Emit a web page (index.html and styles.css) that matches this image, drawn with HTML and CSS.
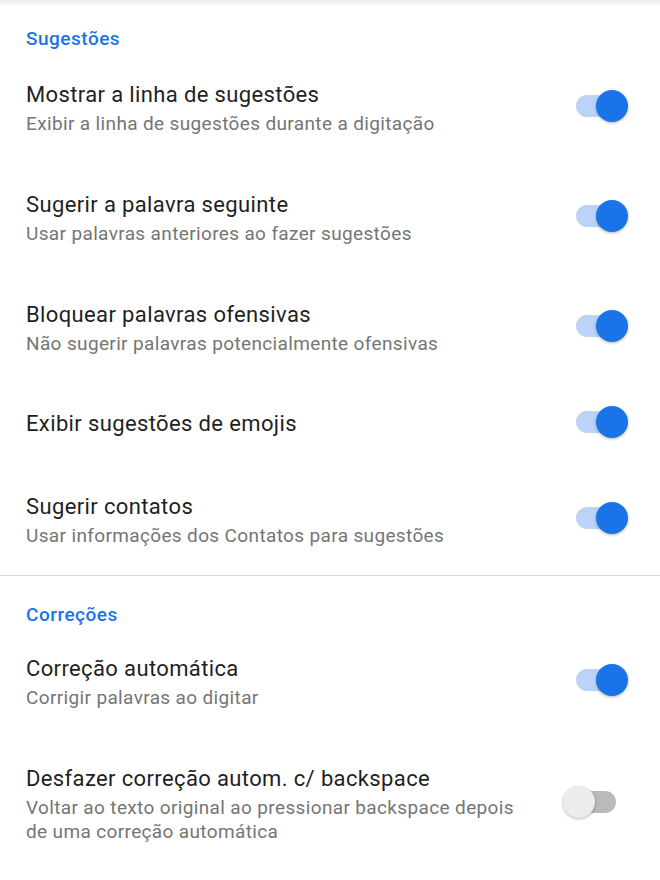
FILE: index.html
```html
<!DOCTYPE html>
<html lang="pt-BR">
<head>
<meta charset="utf-8">
<title>Sugestões</title>
<link rel="stylesheet" href="styles.css">
</head>
<body>
<div class="shadow"></div>
<section class="category">
  <h2 class="cat-title">Sugestões</h2>
  <div class="row">
    <div class="text"><div class="title">Mostrar a linha de sugestões</div><div class="summary">Exibir a linha de sugestões durante a digitação</div></div>
    <div class="switch on"><span class="track"></span><span class="thumb"></span></div>
  </div>
  <div class="row">
    <div class="text"><div class="title">Sugerir a palavra seguinte</div><div class="summary">Usar palavras anteriores ao fazer sugestões</div></div>
    <div class="switch on"><span class="track"></span><span class="thumb"></span></div>
  </div>
  <div class="row">
    <div class="text"><div class="title">Bloquear palavras ofensivas</div><div class="summary">Não sugerir palavras potencialmente ofensivas</div></div>
    <div class="switch on"><span class="track"></span><span class="thumb"></span></div>
  </div>
  <div class="row single">
    <div class="text"><div class="title">Exibir sugestões de emojis</div></div>
    <div class="switch on"><span class="track"></span><span class="thumb"></span></div>
  </div>
  <div class="row">
    <div class="text"><div class="title">Sugerir contatos</div><div class="summary">Usar informações dos Contatos para sugestões</div></div>
    <div class="switch on"><span class="track"></span><span class="thumb"></span></div>
  </div>
</section>
<section class="category second">
  <h2 class="cat-title">Correções</h2>
  <div class="row">
    <div class="text"><div class="title">Correção automática</div><div class="summary">Corrigir palavras ao digitar</div></div>
    <div class="switch on"><span class="track"></span><span class="thumb"></span></div>
  </div>
  <div class="row">
    <div class="text"><div class="title">Desfazer correção autom. c/ backspace</div><div class="summary">Voltar ao texto original ao pressionar backspace depois de uma correção automática</div></div>
    <div class="switch off"><span class="track"></span><span class="thumb"></span></div>
  </div>
</section>
</body>
</html>
```
FILE: styles.css
```css
html, body {
  margin: 0;
  padding: 0;
  background: #ffffff;
}
body {
  width: 660px;
  height: 880px;
  overflow: hidden;
  font-family: Roboto, "Noto Sans", "Liberation Sans", sans-serif;
  position: relative;
}
.shadow {
  position: absolute;
  top: 0;
  left: 0;
  right: 0;
  height: 6px;
  background: linear-gradient(#ececec, rgba(255,255,255,0));
}
.category.second {
  border-top: 1px solid #dadce0;
}
.cat-title {
  margin: 0;
  padding: 27px 26px 2px;
  font-size: 19px;
  line-height: 24px;
  font-weight: 500;
  letter-spacing: 0.5px;
  color: #1a73e8;
}
.second .cat-title {
  padding: 27px 26px 0;
}
.row {
  display: flex;
  align-items: center;
  padding: 27px 31px 27px 26px;
}
.row.single {
  padding-top: 25px;
  padding-bottom: 25px;
}
.text {
  flex: 1;
  min-width: 0;
  margin-right: 42px;
}
.title {
  font-size: 22px;
  line-height: 30px;
  letter-spacing: 0.37px;
  color: #1f1f1f;
}
.summary {
  margin-top: 2px;
  font-size: 19px;
  line-height: 24px;
  letter-spacing: 0.36px;
  color: #757575;
}
.switch {
  position: relative;
  flex: none;
  width: 66px;
  height: 32px;
  margin: -2px 0 2px;
}
.track {
  position: absolute;
  left: 13px;
  top: 5px;
  width: 40px;
  height: 22px;
  border-radius: 11px;
}
.thumb {
  position: absolute;
  top: 0;
  width: 32px;
  height: 32px;
  border-radius: 50%;
  box-shadow: 0 1px 3px rgba(0,0,0,0.3);
}
.on .track { background: #bcd3f8; }
.on .thumb { left: 33px; background: #1a73e8; }
.off .track { background: #bababa; }
.off .thumb { left: 0; background: #ececec; }
```
